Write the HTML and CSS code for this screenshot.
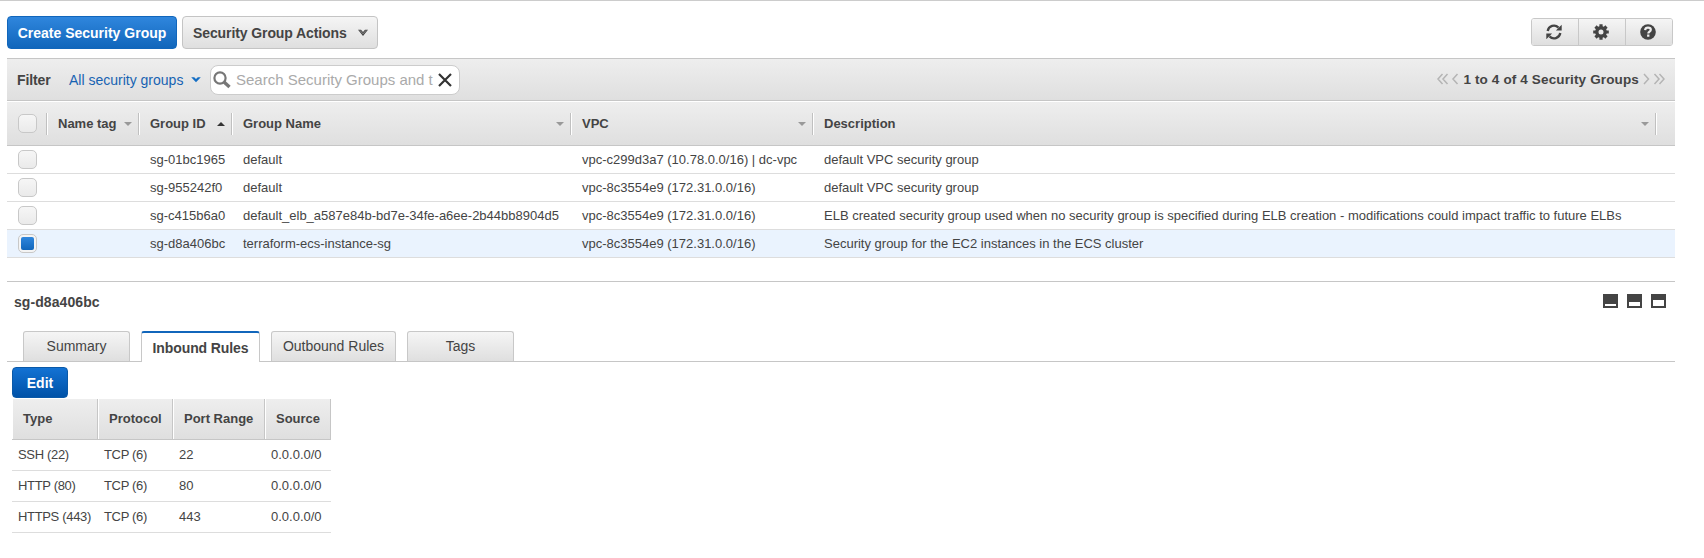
FILE: index.html
```html
<!DOCTYPE html>
<html lang="en">
<head>
<meta charset="utf-8">
<title>Security Groups</title>
<link rel="stylesheet" href="styles.css">
</head>
<body>
<main class="console">
  <div class="actions">
    <div class="actions-left">
      <button class="btn btn-primary create">Create Security Group</button>
      <button class="btn btn-plain menu">Security Group Actions
        <svg class="chev" width="10" height="8" viewBox="0 0 10 8"><path d="M0 .8h3L5 3 7 .8h3L5 7z" fill="#444"/><path d="M1.800 1.300L5 4.800 8.200 1.300" fill="none" stroke="#999" stroke-width=".8"/></svg>
      </button>
    </div>
    <div class="tools">
      <button class="tool" aria-label="Refresh"><svg width="16" height="16" viewBox="0 0 16 16"><path d="M1.700 7A6.300 6.300 0 0 1 12.500 3.600M14.300 9A6.300 6.300 0 0 1 3.500 12.400" fill="none" stroke="#444" stroke-width="2.300"/><path d="M15.700 0.800V6.600H9.900zM.3 15.200V9.400h5.800z" fill="#444"/></svg></button>
      <button class="tool" aria-label="Settings"><svg width="16" height="16" viewBox="0 0 16 16"><circle cx="8" cy="8" r="4.200" fill="none" stroke="#444" stroke-width="3.400"/><g stroke="#444" stroke-width="3.200"><path d="M8 .2v3M8 12.800v3M.2 8h3M12.800 8h3M2.500 2.500l2 2M11.500 11.500l2 2M2.500 13.500l2-2M11.500 4.500l2-2"/></g></svg></button>
      <button class="tool" aria-label="Help"><svg width="16" height="16" viewBox="0 0 16 16"><circle cx="8" cy="8" r="7.800" fill="#444"/><path d="M5.100 6.100C5.300 4.400 6.500 3.700 8 3.700c1.600 0 2.800.8 2.800 2.100 0 1.800-2.500 1.900-2.500 3.700" fill="none" stroke="#eee" stroke-width="2.200"/><path d="M7.100 10.600h2.300v2.200H7.100z" fill="#eee"/></svg></button>
    </div>
  </div>

  <div class="filter">
    <span class="filter-label">Filter</span>
    <span class="filter-link">All security groups</span>
    <svg class="filter-chev" width="10" height="6" viewBox="0 0 10 6"><path d="M.2.300h3L5 2.100 6.800.300h3L5 5.300z" fill="#146ec4"/></svg>
    <div class="search">
      <svg width="18" height="18" viewBox="0 0 18 18"><circle cx="7" cy="7" r="5.600" fill="none" stroke="#777" stroke-width="2.200"/><path d="M11 11l5.500 5" stroke="#777" stroke-width="3.400"/></svg>
      <span class="placeholder">Search Security Groups and t</span>
      <svg width="14" height="14" viewBox="0 0 14 14"><path d="M1 1l12 12M13 1L1 13" stroke="#333" stroke-width="2.200"/></svg>
    </div>
    <div class="pager">
      <svg width="22" height="14" viewBox="0 0 22 14"><path d="M5.500 1L1 6l4.500 5M10.500 1L6 6l4.500 5M20.500 1L16 6l4.500 5" fill="none" stroke="#b4b4b4" stroke-width="1.500"/></svg>
      <span class="count">1 to 4 of 4 Security Groups</span>
      <svg width="22" height="14" viewBox="0 0 22 14"><path d="M1 1l4.500 5L1 11M11.500 1l4.500 5-4.500 5M16.500 1L21 6l-4.500 5" fill="none" stroke="#b4b4b4" stroke-width="1.500"/></svg>
    </div>
  </div>

  <div class="grid">
    <div class="row head">
      <span class="cell check"><i class="box"></i></span>
      <span class="cell">Name tag<i class="arrow down"></i></span>
      <span class="cell">Group ID<i class="arrow up"></i></span>
      <span class="cell">Group Name<i class="arrow down"></i></span>
      <span class="cell">VPC<i class="arrow down"></i></span>
      <span class="cell">Description<i class="arrow down"></i></span>
    </div>
    <div class="row">
      <span class="cell check"><i class="box"></i></span><span class="cell"></span>
      <span class="cell">sg-01bc1965</span><span class="cell">default</span>
      <span class="cell">vpc-c299d3a7 (10.78.0.0/16) | dc-vpc</span><span class="cell">default VPC security group</span>
    </div>
    <div class="row">
      <span class="cell check"><i class="box"></i></span><span class="cell"></span>
      <span class="cell">sg-955242f0</span><span class="cell">default</span>
      <span class="cell">vpc-8c3554e9 (172.31.0.0/16)</span><span class="cell">default VPC security group</span>
    </div>
    <div class="row">
      <span class="cell check"><i class="box"></i></span><span class="cell"></span>
      <span class="cell">sg-c415b6a0</span><span class="cell">default_elb_a587e84b-bd7e-34fe-a6ee-2b44bb8904d5</span>
      <span class="cell">vpc-8c3554e9 (172.31.0.0/16)</span><span class="cell">ELB created security group used when no security group is specified during ELB creation - modifications could impact traffic to future ELBs</span>
    </div>
    <div class="row selected">
      <span class="cell check"><i class="box on"></i></span><span class="cell"></span>
      <span class="cell">sg-d8a406bc</span><span class="cell">terraform-ecs-instance-sg</span>
      <span class="cell">vpc-8c3554e9 (172.31.0.0/16)</span><span class="cell">Security group for the EC2 instances in the ECS cluster</span>
    </div>
  </div>

  <section class="detail">
    <div class="detail-head">
      <h2 class="detail-title">sg-d8a406bc</h2>
      <div class="panes"><i class="pane low"></i><i class="pane mid"></i><i class="pane high"></i></div>
    </div>
    <nav class="tabs">
      <a class="tab summary">Summary</a>
      <a class="tab inbound">Inbound Rules</a>
      <a class="tab outbound">Outbound Rules</a>
      <a class="tab tags">Tags</a>
    </nav>
    <button class="btn btn-primary edit">Edit</button>
    <div class="rules">
      <div class="rule rule-head"><span>Type</span><span>Protocol</span><span>Port Range</span><span>Source</span></div>
      <div class="rule"><span class="tight">SSH (22)</span><span class="tight">TCP (6)</span><span>22</span><span>0.0.0.0/0</span></div>
      <div class="rule"><span class="tight">HTTP (80)</span><span class="tight">TCP (6)</span><span>80</span><span>0.0.0.0/0</span></div>
      <div class="rule"><span class="tight">HTTPS (443)</span><span class="tight">TCP (6)</span><span>443</span><span>0.0.0.0/0</span></div>
    </div>
  </section>
</main>
</body>
</html>
```

FILE: styles.css
```css
* { box-sizing: border-box; }
body {
  margin: 0;
  background: #fff;
  color: #444;
  font: 13px "Liberation Sans", Arial, sans-serif;
}
.console {
  height: 558px;
  border-top: 1px solid #ccc;
  padding: 0 29px 0 7px;
}
svg { display: block; flex: none; }

.actions {
  display: flex;
  justify-content: space-between;
  align-items: flex-start;
  height: 57px;
  padding: 15px 2px 0 0;
}
.actions-left { display: flex; gap: 5px; }
.btn {
  display: flex;
  align-items: center;
  margin: 0;
  font: bold 14px "Liberation Sans", Arial, sans-serif;
  white-space: nowrap;
  border-radius: 4px;
}
.btn-primary {
  justify-content: center;
  padding: 0;
  color: #fff;
  border: 1px solid #1166bb;
  background: linear-gradient(#2f86dd, #1166bb);
}
.create { width: 170px; height: 33px; }
.btn-plain {
  color: #444;
  border: 1px solid #c4c4c4;
  background: linear-gradient(#f5f5f5, #dfdfdf);
}
.menu { width: 196px; height: 33px; padding: 0 9px 0 10px; justify-content: space-between; letter-spacing: -0.1px; }
.tools {
  display: flex;
  width: 142px;
  height: 28px;
  margin-top: 2px;
  border: 1px solid #c8c8c8;
  border-radius: 3px;
  overflow: hidden;
}
.tool {
  display: flex;
  flex: 1;
  align-items: center;
  justify-content: center;
  padding: 0 2px 0 0;
  border: 0;
  background: linear-gradient(#f5f5f5, #dfdfdf);
}
.tool + .tool { border-left: 1px solid #c8c8c8; }

.filter {
  display: flex;
  align-items: center;
  height: 43px;
  padding-left: 10px;
  border: solid #c6c6c6;
  border-width: 1px 0;
  background: linear-gradient(#eee, #dfdfdf);
}
.filter-label { width: 52px; font-size: 14px; font-weight: bold; letter-spacing: -0.1px; }
.filter-link { width: 122px; font-size: 14px; color: #1763b2; white-space: nowrap; }
.filter-chev { margin-right: 9px; }
.search {
  display: flex;
  align-items: center;
  width: 250px;
  height: 30px;
  padding-left: 2px;
  border: 1px solid #ccc;
  border-radius: 8px;
  background: #fff;
}
.placeholder { flex: none; width: 207px; padding-left: 5px; font-size: 15px; color: #aaa; white-space: nowrap; }
.pager { display: flex; align-items: center; gap: 4px; margin-left: auto; padding-right: 10px; }
.count { font-size: 13.500px; font-weight: bold; letter-spacing: 0.14px; white-space: nowrap; }

.row {
  display: grid;
  grid-template-columns: 41px 92px 93px 339px 242px 843px 18px;
  align-items: center;
  height: 28px;
  border-bottom: 1px solid #ddd;
}
.cell { display: flex; align-items: center; padding-left: 10px; white-space: nowrap; }
.check { padding-left: 11px; }
.head {
  height: 45px;
  font-weight: bold;
  border-top: 1px solid #fff;
  border-bottom-color: #c6c6c6;
  background: linear-gradient(#eee, #dfdfdf);
}
.head .cell {
  height: 22px;
  justify-content: space-between;
  padding-right: 7px;
  border-right: 1px solid #fff;
  box-shadow: inset -1px 0 #c0c0c0;
}
.selected { background: #eaf3fe; }
.box {
  display: block;
  flex: none;
  width: 19px;
  height: 19px;
  border: 1px solid #c8c8c8;
  border-radius: 5px;
  background: linear-gradient(#f6f6f6, #eaeaea);
}
.on {
  padding: 2px;
  background: linear-gradient(#2f86dd, #1166bb) content-box, #f4f4f4;
}
.arrow { border: solid transparent; border-width: 0 4px; }
.down { border-top: 4px solid #999; }
.up { border-bottom: 4px solid #333; }

.detail { margin-top: 23px; border-top: 1px solid #c6c6c6; }
.detail-head { display: flex; justify-content: space-between; height: 49px; padding: 12px 9px 0 7px; }
.detail-title { margin: -1px 0 0; font-size: 14px; line-height: 18px; letter-spacing: 0.080px; }
.panes { display: flex; gap: 9px; }
.pane { width: 15px; height: 14px; border: 2px solid #444; }
.low { border-top-width: 10px; }
.mid { border-top-width: 8px; }
.high { border-top-width: 6px; }
.tabs {
  display: flex;
  align-items: flex-start;
  gap: 11px;
  height: 31px;
  padding-left: 16px;
  border-bottom: 1px solid #c6c6c6;
}
.tab {
  width: 107px;
  height: 30px;
  border: 1px solid #c8c8c8;
  border-bottom: 0;
  border-radius: 3px 3px 0 0;
  background: linear-gradient(#f5f5f5, #dfdfdf);
  font-size: 14px;
  line-height: 29px;
  text-align: center;
}
.inbound {
  width: 119px;
  height: 31px;
  border-top: 2px solid #1166bb;
  background: #fff;
  font-weight: bold;
  line-height: 31px;
  letter-spacing: -0.1px;
}
.outbound { width: 125px; }
.edit { width: 56px; height: 31px; margin: 5px 0 1px 5px; border-color: #0a59a8; background: linear-gradient(#1372d3, #0052a8); }
.rules { width: 319px; margin-left: 5px; }
.rule {
  display: grid;
  grid-template-columns: 86px 75px 92px 66px;
  height: 31px;
  border-bottom: 1px solid #ddd;
}
.rule span { padding-left: 6px; line-height: 30px; white-space: nowrap; }
.rule .tight { letter-spacing: -0.330px; }
.rule-head { height: 41px; font-weight: bold; border-bottom-color: #c6c6c6; }
.rule-head span {
  padding-left: 10px;
  line-height: 40px;
  border-left: 1px solid #fff;
  border-right: 1px solid #c6c6c6;
  background: linear-gradient(#eee, #dfdfdf);
}
```
